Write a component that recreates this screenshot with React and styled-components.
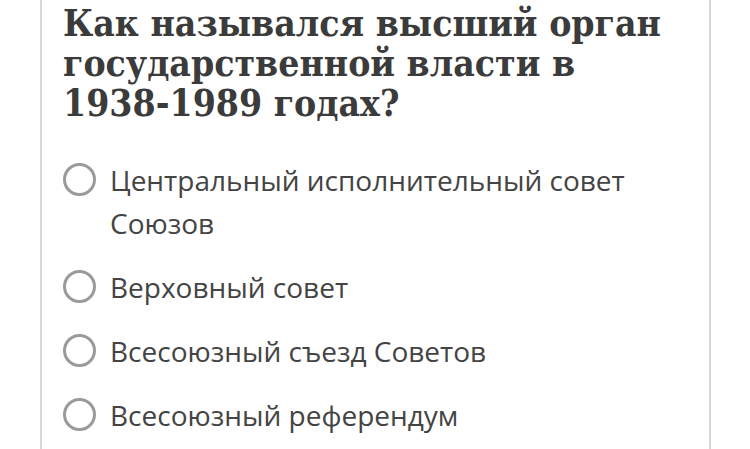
import React from 'react';
import styled, { createGlobalStyle } from 'styled-components';

const GlobalStyle = createGlobalStyle`
  body {
    margin: 0;
    background: #ffffff;
  }
`;

const Card = styled.div`
  margin-left: 40px;
  width: 626px;
  height: 449px;
  border-left: 2px solid #d8d8d8;
  border-right: 2px solid #d8d8d8;
  padding: 0 20px 0 21px;
  overflow: hidden;
`;

const Question = styled.h2`
  margin: 0;
  padding-top: 3px;
  font-family: "DejaVu Serif", "Liberation Serif", serif;
  font-stretch: condensed;
  font-weight: 700;
  font-size: 37px;
  line-height: 40px;
  color: #3b3b3b;
`;

const Options = styled.ul`
  list-style: none;
  margin: 0;
  padding: 36px 0 0 0;
  display: flex;
  flex-direction: column;
  gap: 21px;
`;

const Option = styled.li`
  display: flex;
  align-items: flex-start;
  gap: 14px;
`;

const Radio = styled.span`
  flex: none;
  box-sizing: border-box;
  width: 33px;
  height: 33px;
  margin-top: 4px;
  border: 3px solid #9a9a9a;
  border-radius: 50%;
`;

const Label = styled.span`
  font-family: "Open Sans", "Noto Sans", sans-serif;
  font-size: 28px;
  line-height: 43px;
  color: #444444;
`;

const answers = [
  'Центральный исполнительный совет Союзов',
  'Верховный совет',
  'Всесоюзный съезд Советов',
  'Всесоюзный референдум',
];

const App = () => (
  <>
    <GlobalStyle />
    <Card>
      <Question>Как назывался высший орган государственной власти в 1938-1989 годах?</Question>
      <Options>
        {answers.map((text) => (
          <Option key={text}>
            <Radio />
            <Label>{text}</Label>
          </Option>
        ))}
      </Options>
    </Card>
  </>
);

export default App;
